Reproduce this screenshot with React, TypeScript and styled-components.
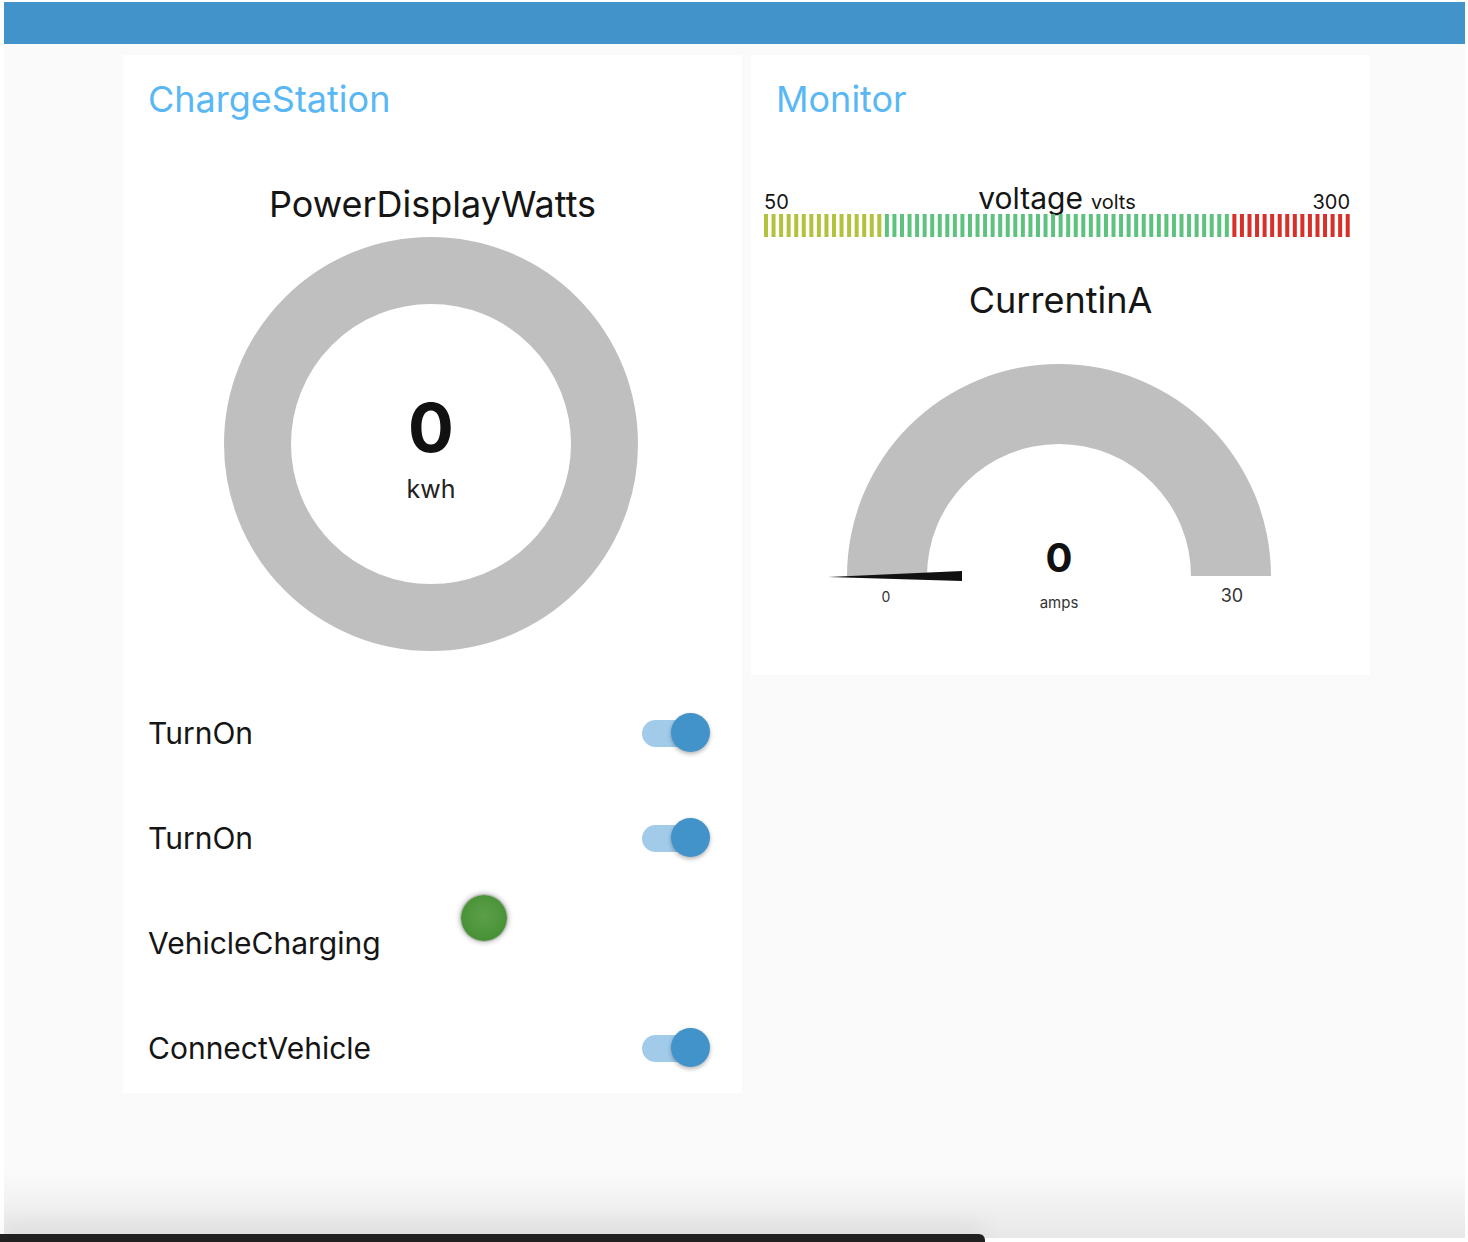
import React from "react";
import styled, { createGlobalStyle } from "styled-components";

const GlobalStyle = createGlobalStyle`
  html, body {
    margin: 0;
    padding: 0;
    background: #ffffff;
  }
  body {
    font-family: Inter, "Noto Sans", "Liberation Sans", sans-serif;
    color: #151515;
    overflow: hidden;
  }
`;

const Frame = styled.div`
  position: relative;
  margin: 2px 3px 0 4px;
  height: 1236px;
  background: linear-gradient(#fafafa 0, #fafafa 1170px, #e8e8e8 1236px);
  overflow: hidden;
`;

const Header = styled.div`
  height: 42px;
  background: #4193c9;
`;

const Main = styled.div`
  display: flex;
  align-items: flex-start;
  gap: 9px;
  padding: 11px 0 0 119px;
`;

const Card = styled.section<{ $height: number }>`
  width: 619px;
  height: ${(p) => p.$height}px;
  background: #ffffff;
  overflow: hidden;
`;

const CardTitle = styled.h1`
  margin: 0;
  padding: 22px 25px 0;
  font-size: 36px;
  line-height: 44px;
  font-weight: 400;
  color: #59b8f4;
`;

const WidgetTitle = styled.h2<{ $top: number }>`
  margin: ${(p) => p.$top}px 0 0;
  font-size: 36px;
  line-height: 44px;
  font-weight: 400;
  text-align: center;
  color: #151515;
`;

const Chart = styled.svg<{ $top?: number }>`
  display: block;
  margin-top: ${(p) => p.$top ?? 0}px;
`;

const Rows = styled.div`
  margin-top: 29px;
`;

const Row = styled.div`
  display: flex;
  align-items: center;
  justify-content: space-between;
  height: 105px;
  padding: 0 32px 0 25px;
`;

const Label = styled.span<{ $width?: number }>`
  font-size: 30px;
  color: #151515;
  flex: ${(p) => (p.$width ? `0 0 ${p.$width}px` : "0 1 auto")};
`;

const LedRow = styled(Row)`
  justify-content: flex-start;
`;

const Led = styled.div`
  align-self: flex-start;
  margin-top: 5px;
  width: 46px;
  height: 46px;
  border-radius: 50%;
  background: radial-gradient(circle at 50% 45%, #5c9f4a 0%, #4b9439 60%, #3b822c 100%);
  box-shadow: 0 0 0 1px rgba(0, 0, 0, 0.12), 0 0 6px rgba(0, 0, 0, 0.45);
`;

const Toggle = styled.div`
  position: relative;
  width: 68px;
  height: 40px;
`;

const Track = styled.div`
  position: absolute;
  left: 0;
  top: 7px;
  width: 58px;
  height: 27px;
  border-radius: 14px;
  background: #a2cbea;
`;

const Knob = styled.div`
  position: absolute;
  right: 0;
  top: 0;
  width: 39px;
  height: 39px;
  border-radius: 50%;
  background: #4193c9;
  box-shadow: 0 2px 4px rgba(0, 0, 0, 0.3);
`;

const Voltage = styled.div`
  margin-top: 63px;
  padding: 0 20px 0 13px;
`;

const ScaleRow = styled.div`
  display: grid;
  grid-template-columns: 1fr auto 1fr;
  align-items: baseline;
  height: 28px;
  line-height: 28px;
  color: #151515;
`;

const ScaleEnd = styled.span<{ $right?: boolean }>`
  font-size: 20px;
  text-align: ${(p) => (p.$right ? "right" : "left")};
`;

const ScaleName = styled.span`
  font-size: 30px;
`;

const ScaleUnit = styled.span`
  font-size: 20px;
  margin-left: 8px;
`;

const Bar = styled.svg`
  display: block;
  margin-top: 2px;
`;

const Dock = styled.div`
  position: fixed;
  left: 0;
  bottom: 0;
  width: 985px;
  height: 8px;
  background: #212121;
  border-top-right-radius: 6px;
  box-shadow: 0 -6px 26px rgba(0, 0, 0, 0.14);
`;

function Switch() {
  return (
    <Toggle>
      <Track />
      <Knob />
    </Toggle>
  );
}

function Donut() {
  return (
    <Chart width={619} height={414} $top={11}>
      <circle cx={308} cy={207} r={173.5} fill="none" stroke="#bfbfbf" strokeWidth={67} />
      <text x={308} y={215} textAnchor="middle" fontSize={68} fontWeight={700} fill="#111">
        0
      </text>
      <text x={308} y={261} textAnchor="middle" fontSize={25} fill="#222">
        kwh
      </text>
    </Chart>
  );
}

const SEGMENTS = 78;
const PITCH = 581.7 / 77;

function segColor(i: number) {
  if (i < 16) return "#b3c23c";
  if (i < 62) return "#5ec27f";
  return "#d7302a";
}

function VoltageBar() {
  return (
    <Voltage>
      <ScaleRow>
        <ScaleEnd>50</ScaleEnd>
        <span>
          <ScaleName>voltage</ScaleName>
          <ScaleUnit>volts</ScaleUnit>
        </span>
        <ScaleEnd $right>300</ScaleEnd>
      </ScaleRow>
      <Bar width={586} height={23}>
        {Array.from({ length: SEGMENTS }, (_, i) => (
          <rect key={i} x={i * PITCH} y={0} width={4} height={23} fill={segColor(i)} />
        ))}
      </Bar>
    </Voltage>
  );
}

function Gauge() {
  return (
    <Chart width={619} height={353}>
      <path d="M 96 254 A 212 212 0 0 1 520 254 L 440 254 A 132 132 0 0 0 176 254 Z" fill="#bfbfbf" />
      <polygon points="77,255 211,249 211,259" fill="#111" />
      <text
        x={308}
        y={235}
        textAnchor="middle"
        dominantBaseline="central"
        fontSize={40}
        fontWeight={700}
        fill="#111"
      >
        0
      </text>
      <text x={308} y={280} textAnchor="middle" dominantBaseline="central" fontSize={15} fill="#333">
        amps
      </text>
      <text x={135} y={274} textAnchor="middle" dominantBaseline="central" fontSize={14} fill="#333">
        0
      </text>
      <text x={481} y={273} textAnchor="middle" dominantBaseline="central" fontSize={18} fill="#333">
        30
      </text>
    </Chart>
  );
}

export default function App() {
  return (
    <>
      <GlobalStyle />
      <Frame>
        <Header />
        <Main>
          <Card $height={1038}>
            <CardTitle>ChargeStation</CardTitle>
            <WidgetTitle $top={61}>PowerDisplayWatts</WidgetTitle>
            <Donut />
            <Rows>
              <Row>
                <Label>TurnOn</Label>
                <Switch />
              </Row>
              <Row>
                <Label>TurnOn</Label>
                <Switch />
              </Row>
              <LedRow>
                <Label $width={313}>VehicleCharging</Label>
                <Led />
              </LedRow>
              <Row>
                <Label>ConnectVehicle</Label>
                <Switch />
              </Row>
            </Rows>
          </Card>
          <Card $height={620}>
            <CardTitle>Monitor</CardTitle>
            <VoltageBar />
            <WidgetTitle $top={41}>CurrentinA</WidgetTitle>
            <Gauge />
          </Card>
        </Main>
      </Frame>
      <Dock />
    </>
  );
}
